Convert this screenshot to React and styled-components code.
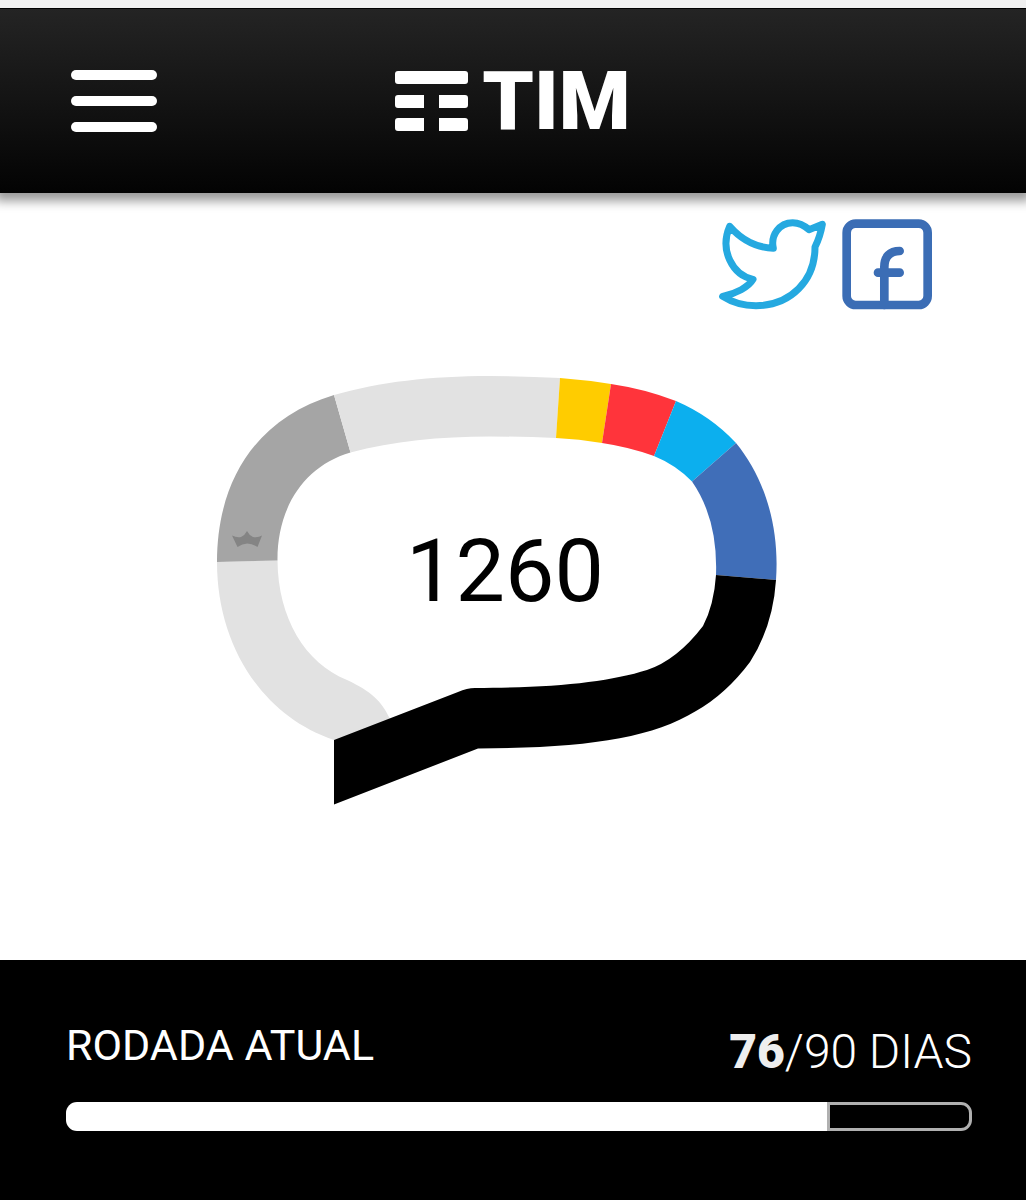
import React from "react";
import styled, { createGlobalStyle } from "styled-components";

const GlobalStyle = createGlobalStyle`
  *, *::before, *::after { box-sizing: border-box; }
  body {
    margin: 0;
    background: #fff;
    font-family: Roboto, "Liberation Sans", sans-serif;
  }
`;

const Page = styled.div`
  display: flex;
  flex-direction: column;
  min-height: 100vh;
`;

const Header = styled.header`
  display: grid;
  grid-template-columns: 1fr auto 1fr;
  align-items: center;
  padding: 61px 71px;
  border-top: 1px solid #000;
  background: linear-gradient(#242424, #030303);
  box-shadow: 0 3px 10px 5px rgba(0, 0, 0, 0.4);
`;

/* Stacked above the header so that its shadow only falls downwards. */
const StatusStrip = styled.div`
  position: relative;
  height: 8px;
  background: #f0f0f0;
`;

const MenuButton = styled.button`
  justify-self: start;
  display: flex;
  flex-direction: column;
  gap: 16px;
  width: 86px;
  padding: 0;
  border: 0;
  background: none;
  cursor: pointer;
`;

const MenuBar = styled.span`
  height: 10px;
  border-radius: 5px;
  background: #fff;
`;

const Brand = styled.a`
  display: flex;
  align-items: center;
  gap: 14px;
  color: #fff;
  text-decoration: none;
`;

const BrandMark = styled.svg`
  width: 73px;
  height: 60px;
  fill: #fff;
`;

const BrandName = styled.span`
  font-size: 82px;
  font-weight: 900;
  line-height: 62px;
`;

const Main = styled.main`
  flex: 1;
  padding: 26px 94px 64px;
`;

const Social = styled.nav`
  display: flex;
  justify-content: flex-end;
  gap: 16px;
`;

const SocialLink = styled.a`
  display: flex;
  color: ${(p) => p.$color};
`;

const SocialIcon = styled.svg`
  height: 91px;
  fill: none;
  stroke: currentColor;
  stroke-linecap: round;
  stroke-linejoin: round;
`;

const Score = styled.section`
  display: grid;
  justify-items: center;
  align-items: center;
  margin-top: 66px;
  padding-right: 32px;
`;

const Balloon = styled.svg`
  grid-area: 1 / 1;
  width: 560px;
  max-width: 100%;
`;

const Points = styled.output`
  grid-area: 1 / 1;
  padding: 0 0 40px 16px;
  color: #000;
  font-size: 88px;
  line-height: 104px;
`;

const Footer = styled.footer`
  display: flex;
  flex-direction: column;
  gap: 22px;
  padding: 60px 54px 69px 66px;
  background: #000;
  color: #fff;
`;

const RoundInfo = styled.div`
  display: flex;
  justify-content: space-between;
  align-items: flex-end;
`;

const RoundTitle = styled.h2`
  margin: 0;
  padding-bottom: 10px;
  font-size: 43px;
  font-weight: 400;
  line-height: 50px;
`;

const Days = styled.p`
  margin: 0;
  font-size: 48px;
  font-weight: 300;
  line-height: 56px;
`;

const DaysDone = styled.strong`
  color: #eee;
  font-weight: 900;
`;

const Track = styled.div`
  display: flex;
  height: 29px;
`;

const Filled = styled.div`
  border-radius: 11px 0 0 11px;
  background: #fff;
`;

const Remaining = styled.div`
  flex: 1;
  border: 3px solid #b0b0b0;
  border-radius: 0 11px 11px 0;
`;

const segments = [
  ["#e2e2e2", "M217 562C217 645 262 716 334 740L340 745L391 721L389 717C382 702 371 691 347 680C305 663 278 618 277.500 560.500Z"],
  ["#a5a5a5", "M217 562C217 480 257 418 334 395L350.500 452.500C304 466 277 508 277.500 560.500Z"],
  ["#e2e2e2", "M334 395C380 382 430 376 490 376Q525 376 560 378L556 438Q524 436.500 490 436.500C440 436.500 393 441 350.500 452.500Z"],
  ["#fc0", "M560 378Q586 380 611 384L602 443Q579 439 556 438Z"],
  ["#ff343b", "M611 384Q645 389 676 401L654 456Q629 447 602 443Z"],
  ["#0cafee", "M676 401Q711 416 736 443L692 481.500Q676 465 654 456Z"],
  ["#406eb8", "M736 443C763 476 780 524 776 580L716 575Q718 519 692 481.500Z"],
  ["#000", "M776 580Q773 626 750 662Q726 694 696 711C650 739 584 748 478 748.500L334 804.500V740L458 692Q467 688 475 688C554 688 609 682 647 670Q677 660 703 626Q714 605 716 575Z"],
];

function RoundProgress({ done, total }) {
  const percent = Math.floor((done / total) * 100);
  return (
    <Footer>
      <RoundInfo>
        <RoundTitle id="round">RODADA ATUAL</RoundTitle>
        <Days>
          <DaysDone>{done}</DaysDone>/{total} DIAS
        </Days>
      </RoundInfo>
      <Track role="progressbar" aria-labelledby="round" aria-valuenow={done} aria-valuemin={0} aria-valuemax={total}>
        <Filled style={{ width: `${percent}%` }} />
        <Remaining />
      </Track>
    </Footer>
  );
}

export default function App() {
  return (
    <Page>
      <GlobalStyle />
      <StatusStrip />
      <Header>
        <MenuButton type="button" aria-label="Menu">
          <MenuBar />
          <MenuBar />
          <MenuBar />
        </MenuButton>
        <Brand href="#">
          <BrandMark viewBox="0 0 73 60" aria-hidden="true">
            <rect width="73" height="13" rx="3" />
            <path d="M3 24H29V37H3Q0 37 0 34V27Q0 24 3 24ZM44 24H70Q73 24 73 27V34Q73 37 70 37H44Z" />
            <path d="M3 47H29V60H3Q0 60 0 57V50Q0 47 3 47ZM44 47H70Q73 47 73 50V57Q73 60 70 60H44Z" />
          </BrandMark>
          <BrandName>TIM</BrandName>
        </Brand>
      </Header>
      <Main>
        <Social>
          <SocialLink href="#" aria-label="Twitter" $color="#25a9e0">
            <SocialIcon viewBox="54 116 321 273" strokeWidth="21">
              <path d="M65 348C105 340 143 320 156 297C95 285 55 210 86 138C125 182 165 201 217 204C208 165 235 127 275 127C296 127 310 135 324 148L364 132C359 160 353 178 342 200C342 300 270 376 165 376C125 376 90 364 65 348Z" />
            </SocialIcon>
          </SocialLink>
          <SocialLink href="#" aria-label="Facebook" $color="#3b6db5">
            <SocialIcon viewBox="425 116 271 273" strokeWidth="26">
              <rect x="439" y="130" width="243" height="244" rx="27" />
              <path d="M598 212C569 212 552 229 552 260V374M533 277H598" />
            </SocialIcon>
          </SocialLink>
        </Social>
        <Score>
          <Balloon viewBox="217 376 560 429" aria-hidden="true">
            {segments.map(([fill, d]) => (
              <path key={d} fill={fill} d={d} />
            ))}
            <path fill="#848484" d="M232 535.500Q237 538 241 537Q245 535 247 531Q249 535 253 537Q258 538 262 535.500L257.500 547Q247 540 237.500 547Z" />
          </Balloon>
          <Points>1260</Points>
        </Score>
      </Main>
      <RoundProgress done={76} total={90} />
    </Page>
  );
}
